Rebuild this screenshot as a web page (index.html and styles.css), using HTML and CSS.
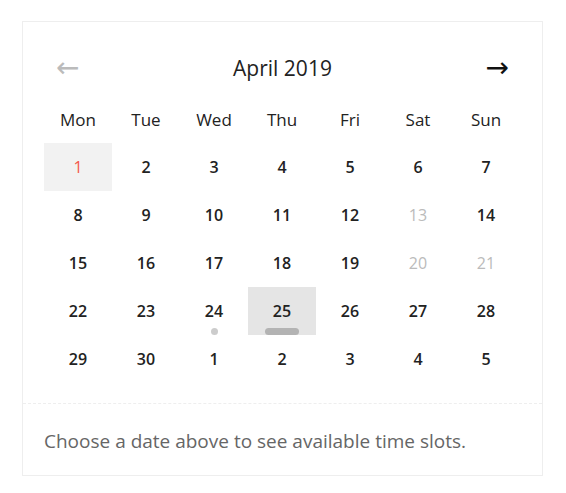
FILE: index.html
```html
<!DOCTYPE html>
<html>
<head>
<meta charset="utf-8">
<link rel="stylesheet" href="styles.css">
</head>
<body>
<div class="card">
  <div class="header">
    <span class="nav nav-prev">&#8592;</span>
    <span class="title">April 2019</span>
    <span class="nav nav-next">&#8594;</span>
  </div>
  <div class="grid">
    <div class="dow">Mon</div><div class="dow">Tue</div><div class="dow">Wed</div><div class="dow">Thu</div><div class="dow">Fri</div><div class="dow">Sat</div><div class="dow">Sun</div>
    <div class="day today">1</div><div class="day">2</div><div class="day">3</div><div class="day">4</div><div class="day">5</div><div class="day">6</div><div class="day">7</div>
    <div class="day">8</div><div class="day">9</div><div class="day">10</div><div class="day">11</div><div class="day">12</div><div class="day off">13</div><div class="day">14</div>
    <div class="day">15</div><div class="day">16</div><div class="day">17</div><div class="day">18</div><div class="day">19</div><div class="day off">20</div><div class="day off">21</div>
    <div class="day">22</div><div class="day">23</div><div class="day">24<span class="dot"></span></div><div class="day selected">25<span class="bar"></span></div><div class="day">26</div><div class="day">27</div><div class="day">28</div>
    <div class="day">29</div><div class="day">30</div><div class="day">1</div><div class="day">2</div><div class="day">3</div><div class="day">4</div><div class="day">5</div>
  </div>
  <div class="footer">Choose a date above to see available time slots.</div>
</div>
</body>
</html>
```
FILE: styles.css
```css
html, body {
  margin: 0;
  padding: 0;
  background: #fff;
}
body {
  font-family: "Open Sans", "Noto Sans", sans-serif;
  color: #222;
}
.card {
  margin: 21px 0 0 22px;
  width: 521px;
  border: 1px solid #eeeeee;
  box-sizing: border-box;
}
.header {
  display: flex;
  align-items: center;
  justify-content: space-between;
  height: 48px;
  margin-top: 22px;
  padding: 0 33px 0 33px;
}
.title {
  font-size: 21px;
  color: #222;
}
.nav {
  font-size: 28px;
  line-height: 1;
  font-family: "DejaVu Sans", sans-serif;
}
.nav-prev { color: #bbb; }
.nav-next { color: #111; }
.grid {
  display: grid;
  grid-template-columns: repeat(7, 68px);
  grid-auto-rows: 48px;
  padding: 0 21px;
  margin-top: 3px;
}
.dow {
  display: flex;
  align-items: center;
  justify-content: center;
  padding-top: 1px;
  font-size: 17px;
  color: #222;
}
.day {
  position: relative;
  display: flex;
  align-items: center;
  justify-content: center;
  font-size: 16px;
  font-weight: 600;
  color: #222;
}
.day.today {
  background: #f2f2f2;
  color: #f4574b;
  font-weight: 400;
}
.day.off {
  color: #bbb;
  font-weight: 400;
}
.day.selected {
  background: #e5e5e5;
}
.dot {
  position: absolute;
  left: 31px;
  top: 41px;
  width: 7px;
  height: 7px;
  border-radius: 50%;
  background: #cccccc;
}
.bar {
  position: absolute;
  left: 17px;
  top: 41px;
  width: 34px;
  height: 7px;
  border-radius: 4px;
  background: #b3b3b3;
}
.footer {
  margin-top: 20px;
  border-top: 1px dashed #eeeeee;
  padding: 24px 21px 21px 21px;
  font-size: 19px;
  color: #666;
  line-height: 26px;
}
```
